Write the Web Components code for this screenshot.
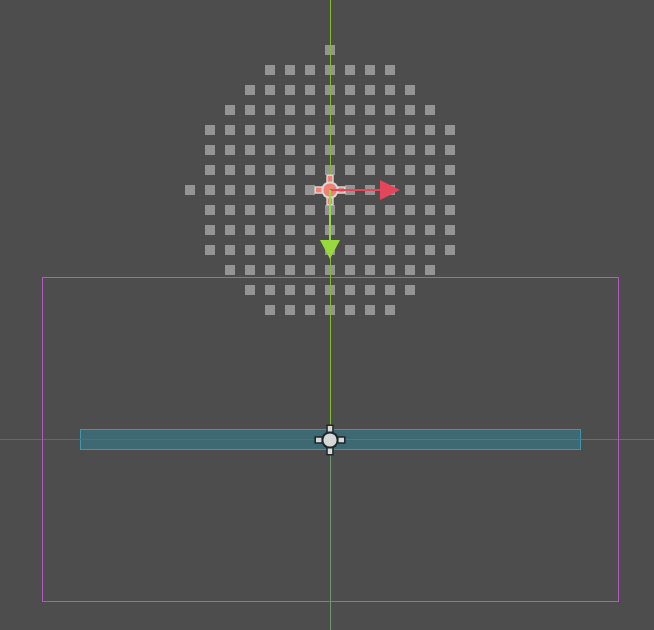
<!DOCTYPE html>
<html lang="en">
<head>
<meta charset="utf-8">
<title>Scene viewport</title>
<style>
html, body { margin: 0; height: 100%; background: #4d4d4d; overflow: hidden; }
</style>
</head>
<body>
<scene-viewport></scene-viewport>
<script>
class PointField extends HTMLElement {
  connectedCallback() {
    // Half-width, in cells, of each row, from 7 cells above the centre to 6 below it.
    const rows = [0, 3, 4, 5, 6, 6, 6, 7, 6, 6, 6, 5, 4, 3];
    let squares = '';
    rows.forEach((half, i) => {
      const right = half === 7 ? 6 : half;
      for (let c = -half; c <= right; c++) {
        squares += `<rect x="${c * 20 + 140}" y="${i * 20}" width="10" height="10"/>`;
      }
    });
    this.attachShadow({ mode: 'open' }).innerHTML = `
      <style>:host { display: block; } svg { display: block; fill: #949494; }</style>
      <svg width="270" height="270" shape-rendering="crispEdges" aria-hidden="true">${squares}</svg>`;
  }
}
customElements.define('point-field', PointField);

class PivotMarker extends HTMLElement {
  connectedCallback() {
    this.attachShadow({ mode: 'open' }).innerHTML = `
      <style>
        :host { display: block; }
        svg { display: block; }
        .edge { fill: var(--edge); }
        .core { fill: var(--core); }
      </style>
      <svg width="32" height="32" viewBox="0 0 32 32" aria-hidden="true">
        <g class="edge"><path d="M12.3.4h7.4v31.2h-7.4zM.4 12.3h31.2v7.4H.4z"/><circle cx="16" cy="16" r="8.7"/></g>
        <g class="core"><path d="M13.8 2h4.4v5.4h-4.4zM13.8 24.6h4.4V30h-4.4zM2 13.8h5.4v4.4H2zM24.6 13.8H30v4.4h-5.4z"/><circle cx="16" cy="16" r="6.6"/></g>
      </svg>`;
  }
}
customElements.define('pivot-marker', PivotMarker);

class MoveGizmo extends HTMLElement {
  connectedCallback() {
    this.attachShadow({ mode: 'open' }).innerHTML = `
      <style>:host { display: block; } svg { display: block; }</style>
      <svg width="80" height="80" viewBox="-10 -10 80 80" aria-hidden="true">
        <path d="M0-1h50v2H0z" fill="#e5455a"/><path d="M50-10 70 0 50 10z" fill="#e5455a"/>
        <path d="M-1 0h2v50h-2z" fill="#98d93d"/><path d="M-10 50h20L0 69z" fill="#98d93d"/>
      </svg>`;
  }
}
customElements.define('move-gizmo', MoveGizmo);

class SceneViewport extends HTMLElement {
  connectedCallback() {
    this.attachShadow({ mode: 'open' }).innerHTML = `
      <style>
        :host { display: block; position: relative; width: 100%; height: 100%; background: #4d4d4d; overflow: hidden;
          --origin-x: calc(50% + 3px); --origin-y: 440px; }
        .item { position: absolute; }
        .body { left: 80px; right: 73px; top: 429px; height: 21px; box-sizing: border-box; background: #3e6872; border: 1px solid #4295ae; }
        .bounds { left: 42px; right: 35px; top: 277px; height: 325px; box-sizing: border-box; border: 1px solid #b05bbd; }
        .x-axis { left: 0; right: 0; top: 439px; height: 1px; background: linear-gradient(90deg, #a04b57 var(--origin-x), #94509e var(--origin-x)); }
        .y-axis { left: var(--origin-x); top: 0; bottom: 0; width: 1px; background: linear-gradient(#85b733 var(--origin-y), #719675 var(--origin-y)); }
        point-field { left: calc(var(--origin-x) - 145px); top: 45px; }
        pivot-marker { left: calc(var(--origin-x) - 16px); }
        .selected { top: 174px; --edge: #d9d6d3; --core: #f08074; }
        .origin { top: 424px; --edge: #1c282b; --core: #d7d7d7; }
        move-gizmo { left: calc(var(--origin-x) - 10px); top: 180px; }
      </style>
      <point-field class="item"></point-field>
      <div class="item body"></div>
      <div class="item x-axis"></div>
      <div class="item bounds"></div>
      <div class="item y-axis"></div>
      <pivot-marker class="item origin"></pivot-marker>
      <pivot-marker class="item selected"></pivot-marker>
      <move-gizmo class="item"></move-gizmo>`;
  }
}
customElements.define('scene-viewport', SceneViewport);
</script>
</body>
</html>
